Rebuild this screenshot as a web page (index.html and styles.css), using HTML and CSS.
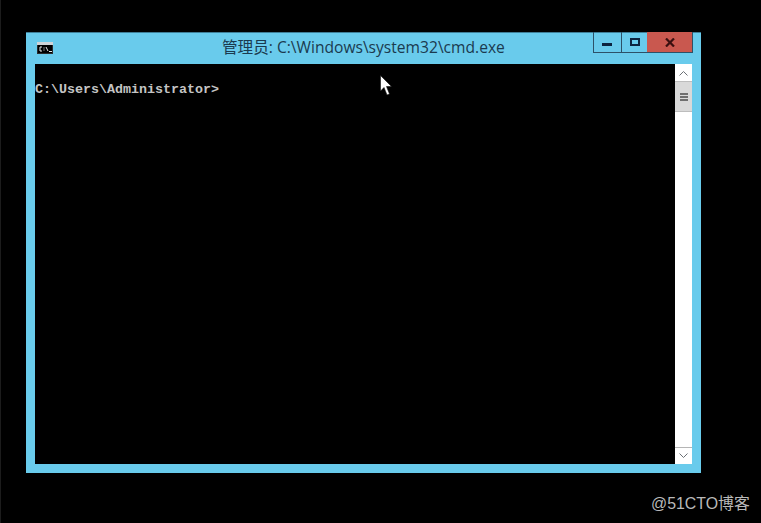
FILE: index.html
```html
<!DOCTYPE html>
<html lang="zh">
<head>
<meta charset="utf-8">
<title>cmd</title>
<link rel="stylesheet" href="styles.css">
</head>
<body>
<div class="desktop">
  <div class="window">
    <div class="titlebar">
      <svg class="app-icon" width="16" height="12" viewBox="0 0 16 12">
        <rect x="0" y="0" width="16" height="12" fill="#2b2b2b"/>
        <rect x="0" y="0" width="16" height="3" fill="#cfd4d8"/>
        <rect x="1" y="3" width="14" height="8" fill="#000"/>
        <path d="M5 5H3V9H5M7 5.5V6.5M7 7.5V8.5M9 5L11 9M12 9.5H15" stroke="#e8e8e8" stroke-width="1" fill="none"/>
      </svg>
      <div class="title">管理员: C:\Windows\system32\cmd.exe</div>
      <div class="controls">
        <div class="ctl ctl-min"><svg width="10" height="4" viewBox="0 0 10 4"><rect width="10" height="3" fill="#0c2440"/></svg></div>
        <div class="ctl ctl-max"><svg width="10" height="8" viewBox="0 0 10 8"><rect x="1" y="1" width="8" height="6" fill="none" stroke="#0c2440" stroke-width="2"/></svg></div>
        <div class="ctl ctl-close"><svg width="10" height="9" viewBox="0 0 10 9"><path d="M1 .5L9 8.5M9 .5L1 8.5" stroke="#3a0f10" stroke-width="2.2" fill="none"/></svg></div>
      </div>
    </div>
    <div class="client">
      <div class="console">C:\Users\Administrator&gt;</div>
      <div class="scrollbar">
        <div class="sb-btn"><svg width="9" height="6" viewBox="0 0 9 6"><path d="M.5 5.5L4.5 1.5L8.5 5.5" stroke="#6b7075" fill="none"/></svg></div>
        <div class="sb-thumb"><span></span><span></span><span></span></div>
        <div class="sb-track"></div>
        <div class="sb-btn sb-btn-down"><svg width="9" height="6" viewBox="0 0 9 6"><path d="M.5 .5L4.5 4.5L8.5 .5" stroke="#6b7075" fill="none"/></svg></div>
      </div>
    </div>
  </div>
  <svg class="cursor" width="12" height="21" viewBox="0 0 12 21"><path d="M.5 .5V16L4 12.5L7 20L9.5 19L6.5 11.5H11.5Z" fill="#fff" stroke="#111" stroke-width=".6"/></svg>
  <div class="watermark">@51CTO博客</div>
</div>
</body>
</html>
```
FILE: styles.css
```css
html, body {
  margin: 0;
  padding: 0;
  background: #000;
}
.desktop {
  position: relative;
  width: 761px;
  height: 523px;
  overflow: hidden;
  background: #000;
  border-left: 1px solid #1c1c1c;
  box-sizing: border-box;
  padding: 32px 0 0 25px;
}
.window {
  width: 675px;
  height: 441px;
  box-sizing: border-box;
  background: #69cbec;
  padding: 0 9px 9px;
  display: flex;
  flex-direction: column;
  box-shadow: inset 0 1px 0 #3f7f98;
}
.titlebar {
  height: 32px;
  flex: none;
  position: relative;
  display: flex;
  align-items: center;
}
.app-icon {
  position: absolute;
  left: 2px;
  top: 10px;
}
.title {
  position: absolute;
  left: 187px;
  top: 5px;
  font: 15.6px/20px "Open Sans", "Noto Sans CJK SC", sans-serif;
  color: #1b3a4f;
  white-space: nowrap;
}
.controls {
  position: absolute;
  right: -1px;
  top: 0;
  display: flex;
  height: 20px;
  border: 1px solid #2d5168;
  border-top: 0;
}
.ctl {
  height: 20px;
  display: flex;
  align-items: center;
  justify-content: center;
  box-sizing: border-box;
}
.ctl-min {
  width: 28px;
  border-right: 1px solid #2d5168;
  align-items: flex-end;
  padding: 0 1px 5px 0;
}
.ctl-max {
  width: 25px;
}
.ctl-close {
  width: 45px;
  background: #c9584f;
}
.client {
  flex: 1;
  display: flex;
  background: #000;
  min-height: 0;
}
.console {
  flex: 1;
  padding-top: 18px;
  font: bold 13.33px/15px "Liberation Mono", monospace;
  color: #c4c4c4;
  white-space: pre;
}
.scrollbar {
  width: 17px;
  flex: none;
  display: flex;
  flex-direction: column;
  background: #fff;
}
.sb-btn {
  height: 17px;
  flex: none;
  display: flex;
  align-items: center;
  justify-content: center;
}
.sb-btn-down {
  border-top: 1px solid #b5b5b5;
  box-sizing: border-box;
}
.sb-thumb {
  height: 31px;
  flex: none;
  box-sizing: border-box;
  background: #d9d9d9;
  border-top: 1px solid #bdbdbd;
  border-bottom: 1px solid #bdbdbd;
  display: flex;
  flex-direction: column;
  align-items: center;
  justify-content: center;
  gap: 1px;
}
.sb-thumb span {
  width: 8px;
  height: 2px;
  background: #6f6f6f;
}
.sb-track {
  flex: 1;
}
.cursor {
  position: absolute;
  left: 379px;
  top: 75px;
}
.watermark {
  position: absolute;
  left: 650px;
  top: 494px;
  font: 15.9px/20px "Liberation Sans", "Noto Sans CJK SC", sans-serif;
  color: #b9b9b9;
  white-space: nowrap;
}
```
